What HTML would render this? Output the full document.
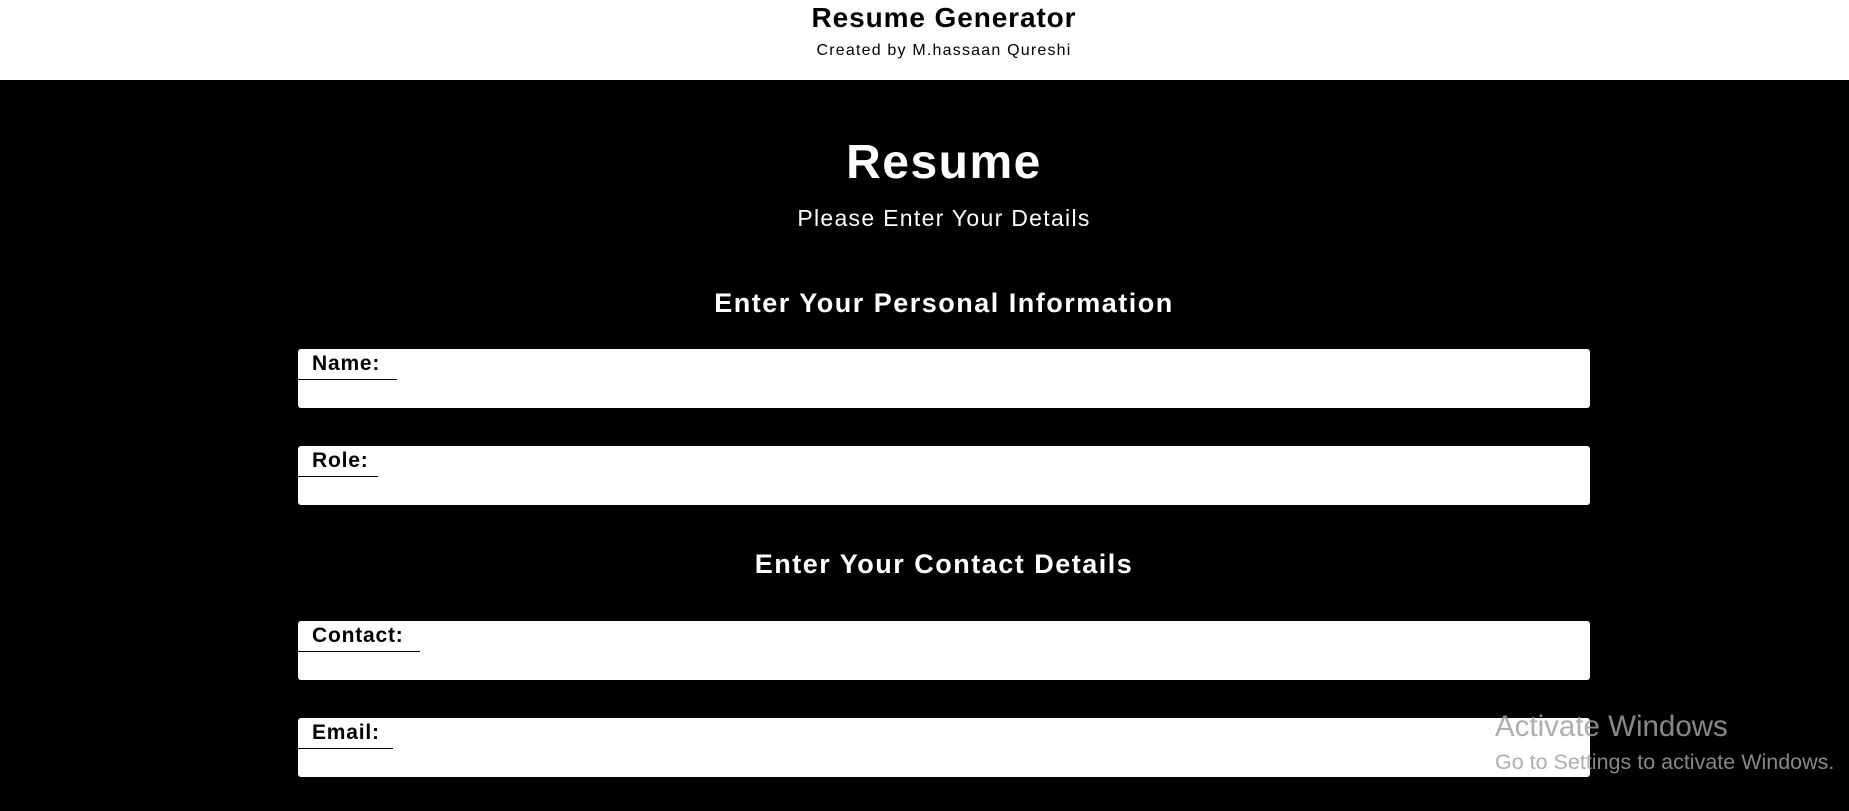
<!DOCTYPE html>
<html><head><meta charset="utf-8"><style>
*{margin:0;padding:0;box-sizing:border-box}
body{width:1849px;height:811px;overflow:hidden;background:#000;font-family:"Liberation Sans",Arial,sans-serif;position:relative}
.hdr{position:absolute;left:0;top:0;width:1849px;height:80px;background:#fff}
.c{position:absolute;left:0;width:1888px;text-align:center;white-space:nowrap}
.t1{top:2px;font-size:28px;font-weight:bold;color:#000;letter-spacing:0.9px}
.t2{top:42px;font-size:16px;color:#000;letter-spacing:1.2px}
.r{top:135px;font-size:48px;font-weight:bold;color:#fff;letter-spacing:1.5px}
.p{top:205px;font-size:23px;color:#fff;letter-spacing:1.3px}
.h{font-size:27px;font-weight:bold;color:#fff;letter-spacing:1.5px}
.box{position:absolute;left:298px;width:1292px;height:59px;background:#fff;border-radius:3px}
.lab{position:absolute;left:0;top:0;height:31px;border-bottom:1.5px solid #000;padding-left:14px;font-size:21px;font-weight:bold;color:#000;line-height:30px;letter-spacing:0.8px}
.wm1{position:absolute;left:1495px;top:710px;font-size:29.5px;color:rgba(160,160,160,0.85)}
.wm2{position:absolute;left:1495px;top:750px;font-size:21.5px;color:rgba(160,160,160,0.85)}
</style></head><body>
<div class="hdr"></div>
<div class="c t1">Resume Generator</div>
<div class="c t2">Created by M.hassaan Qureshi</div>
<div class="c r">Resume</div>
<div class="c p">Please Enter Your Details</div>
<div class="c h" style="top:288px">Enter Your Personal Information</div>
<div class="box" style="top:349px"><div class="lab" style="width:99px">Name:</div></div>
<div class="box" style="top:446px"><div class="lab" style="width:80px">Role:</div></div>
<div class="c h" style="top:549px">Enter Your Contact Details</div>
<div class="box" style="top:621px"><div class="lab" style="width:122px">Contact:</div></div>
<div class="box" style="top:718px"><div class="lab" style="width:95px">Email:</div></div>
<div class="wm1">Activate Windows</div>
<div class="wm2">Go to Settings to activate Windows.</div>
</body></html>
